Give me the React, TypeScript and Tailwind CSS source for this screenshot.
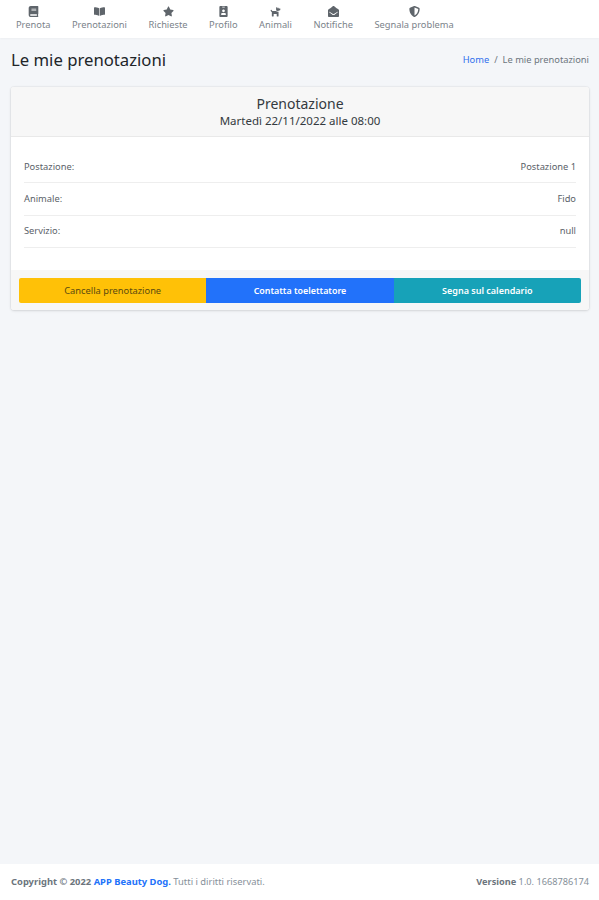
import React from "react";
import {
  FaBook,
  FaBookOpen,
  FaStar,
  FaIdBadge,
  FaDog,
  FaEnvelopeOpen,
  FaShieldAlt,
} from "react-icons/fa";

const navItems = [
  { label: "Prenota", icon: FaBook },
  { label: "Prenotazioni", icon: FaBookOpen },
  { label: "Richieste", icon: FaStar },
  { label: "Profilo", icon: FaIdBadge },
  { label: "Animali", icon: FaDog },
  { label: "Notifiche", icon: FaEnvelopeOpen },
  { label: "Segnala problema", icon: FaShieldAlt },
];

const rows = [
  { label: "Postazione:", value: "Postazione 1" },
  { label: "Animale:", value: "Fido" },
  { label: "Servizio:", value: "null" },
];

const App = () => {
  return (
    <div className="min-h-screen flex flex-col bg-[#f4f6f9] text-[#212529] font-['Noto_Sans','Open_Sans',sans-serif]">
      <nav className="h-[38px] bg-white shadow-[0_1px_2px_rgba(0,0,0,0.03)] flex items-start pl-[16px] gap-[21.5px] pt-[6px]">
        {navItems.map((item) => (
          <a key={item.label} className="flex flex-col items-center text-[#7b838a]">
            <item.icon className="w-[11px] h-[11px] text-[#5f656b]" />
            <span className="text-[9.3px] leading-[13px] mt-[1px]">{item.label}</span>
          </a>
        ))}
      </nav>

      <main className="flex-1 pl-[11px] pr-[10px]">
        <div className="flex items-center justify-between h-[49px]">
          <h1 className="text-[16.7px] leading-[24px] pb-[5px]">Le mie prenotazioni</h1>
          <ol className="flex items-center text-[9.3px] text-[#6c757d] pb-[5px]">
            <li className="text-[#2f6fed]">Home</li>
            <li className="px-[5px]">/</li>
            <li>Le mie prenotazioni</li>
          </ol>
        </div>

        <section className="bg-white rounded-[3px] shadow-[0_0_2px_rgba(0,0,0,0.14),0_1px_3px_rgba(0,0,0,0.1)]">
          <header className="h-[50px] bg-[#f7f7f7] border-b border-[#e9e9e9] flex flex-col items-center pt-[8px] rounded-t-[3px]">
            <h2 className="text-[14px] leading-[17px] text-[#343a40]">Prenotazione</h2>
            <p className="text-[11.5px] leading-[17px] text-[#343a40]">Martedì 22/11/2022 alle 08:00</p>
          </header>

          <div className="px-[13px] pt-[14px] pb-[22px]">
            {rows.map((row) => (
              <div
                key={row.label}
                className="h-[32.3px] flex items-center justify-between border-b border-[#eeeeee] text-[9.3px] text-[#5a6168]"
              >
                <span>{row.label}</span>
                <span>{row.value}</span>
              </div>
            ))}
          </div>

          <footer className="h-[40px] bg-[#f7f7f7] rounded-b-[3px] px-[8px] pt-[8px] flex items-start">
            <button className="flex-1 h-[25px] pt-[1px] bg-[#ffc107] text-[#5b4a10] text-[9.3px] rounded-l-[2px]">
              Cancella prenotazione
            </button>
            <button className="flex-1 h-[25px] pt-[1px] bg-[#2272fa] text-white font-semibold text-[8.9px]">
              Contatta toelettatore
            </button>
            <button className="flex-1 h-[25px] pt-[1px] bg-[#17a2b8] text-white font-semibold text-[9px] rounded-r-[2px]">
              Segna sul calendario
            </button>
          </footer>
        </section>
      </main>

      <footer className="h-[36px] bg-white pl-[11px] pr-[10px] flex items-center justify-between text-[9.2px] text-[#869099]">
        <p className="text-[9.4px]">
          <strong className="text-[#6c757d]">Copyright © 2022 </strong>
          <strong className="text-[#2272fa]">APP Beauty Dog.</strong> Tutti i diritti riservati.
        </p>
        <p>
          <strong className="text-[#6c757d]">Versione</strong> 1.0. 1668786174
        </p>
      </footer>
    </div>
  );
};

export default App;
